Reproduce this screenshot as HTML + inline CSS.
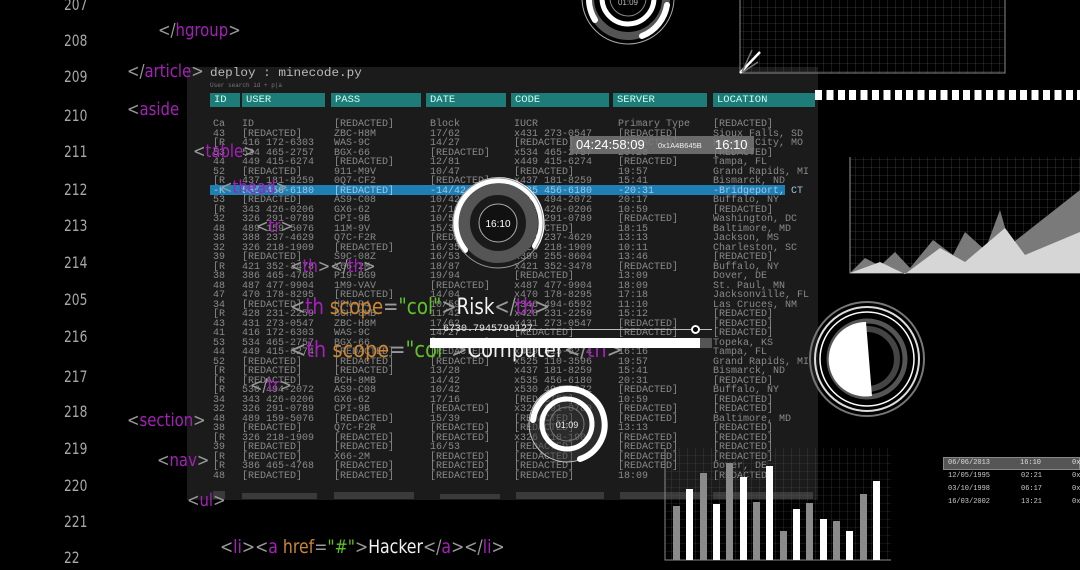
<!DOCTYPE html>
<html><head><meta charset="utf-8"><style>
*{margin:0;padding:0;box-sizing:border-box}
body{width:1080px;height:570px;background:#000;overflow:hidden;position:relative;font-family:"Liberation Mono",monospace}
.a{position:absolute;white-space:nowrap}
.ln{position:absolute;left:64px;font-family:"DejaVu Sans Condensed","DejaVu Sans",sans-serif;font-size:16px;color:#a8a8a8;transform:scaleX(.85);transform-origin:left}
.tg{position:absolute;font-family:"DejaVu Sans Condensed","DejaVu Sans",sans-serif;font-size:18px;color:#9a9a9a;white-space:nowrap;transform:scaleX(.92);transform-origin:left}
.p{color:#a421b8}.o{color:#c98634}.g{color:#5fc226}.w{color:#f2f2f2}
#panel{position:absolute;left:187px;top:67px;width:631px;height:433px;background:#1b1b1b}
.hd{position:absolute;top:93px;height:14px;background:#1d7c77;}
.hd span{position:absolute;left:4px;top:1px;color:#cfe;font-size:10.5px;line-height:13px}
.row{position:absolute;left:0;height:10px;font-size:10px;line-height:10px;color:#8a8a8a;white-space:nowrap}
.row span{position:absolute;top:0}
.br{position:absolute;background:#3a3a3a}
</style></head><body>
<div id="panel"></div>
<div class="a" style="left:210px;top:67px;font-size:11.5px;color:#bbb;transform:scaleX(1.1);transform-origin:left">deploy : minecode.py</div>
<div class="a" style="left:210px;top:82px;font-size:6px;color:#777">User search id + p|a</div>
<div class="hd" style="left:210px;width:30px"><span>ID</span></div>
<div class="hd" style="left:242px;width:83px"><span>USER</span></div>
<div class="hd" style="left:331px;width:90px"><span>PASS</span></div>
<div class="hd" style="left:426px;width:80px"><span>DATE</span></div>
<div class="hd" style="left:511px;width:98px"><span>CODE</span></div>
<div class="hd" style="left:613px;width:94px"><span>SERVER</span></div>
<div class="hd" style="left:713px;width:102px"><span>LOCATION</span></div>
<div class="a" style="left:815px;top:90px;width:265px;height:10px;background:repeating-linear-gradient(90deg,#fff 0 7px,#000 7px 11.4px)"></div>
<div class="a" style="left:210px;top:185px;width:575px;height:10px;background:#1f7fb5"></div>
<div id="rows"></div>
<script>
var d=[
["Ca","ID","[REDACTED]","Block","IUCR","Primary Type","[REDACTED]"],
["43","[REDACTED]","ZBC-H8M","17/62","x431 273-0547","[REDACTED]","Sioux Falls, SD"],
["[R","416 172-6303","WAS-9C","14/27","[REDACTED]","[REDACTED]","Kansas City, MO"],
["53","534 465-2757","BGX-66","[REDACTED]","x534 465-2757","20:28","[REDACTED]"],
["44","449 415-6274","[REDACTED]","12/81","x449 415-6274","[REDACTED]","Tampa, FL"],
["52","[REDACTED]","911-M9V","10/47","[REDACTED]","19:57","Grand Rapids, MI"],
["[R","437 181-8259","0Q7-CF2","[REDACTED]","x437 181-8259","15:41","Bismarck, ND"],
["-K","535 456-6180","[REDACTED]","-14/42","x535 456-6180","-20:31","-Bridgeport, CT"],
["53","[REDACTED]","AS9-C08","10/42","x530 494-2072","20:17","Buffalo, NY"],
["[R","343 426-0206","GX6-62","17/16","x343 426-0206","10:59","[REDACTED]"],
["32","326 291-0789","CPI-9B","10/59","x326 291-0789","[REDACTED]","Washington, DC"],
["48","489 159-5076","11M-9V","15/39","[REDACTED]","18:15","Baltimore, MD"],
["38","388 237-4629","Q7C-F2R","[REDACTED]","x388 237-4629","13:13","Jackson, MS"],
["32","326 218-1909","[REDACTED]","16/35","x326 218-1909","10:11","Charleston, SC"],
["39","[REDACTED]","S9C-08Z","16/53","x399 255-8604","13:46","[REDACTED]"],
["[R","421 352-3478","X66-2M","18/87","x421 352-3478","[REDACTED]","Buffalo, NY"],
["38","386 465-4768","P19-BG9","19/94","[REDACTED]","13:09","Dover, DE"],
["48","487 477-9904","1M9-VAV","[REDACTED]","x487 477-9904","18:09","St. Paul, MN"],
["47","470 178-8295","[REDACTED]","14/04","x470 178-8295","17:18","Jacksonville, FL"],
["34","[REDACTED]","HPN-R4","10/59","x346 494-6592","11:10","Las Cruces, NM"],
["[R","428 231-2259","BCH-8MB","11/42","x428 231-2259","15:12","[REDACTED]"],
["43","431 273-0547","ZBC-H8M","17/62","x431 273-0547","[REDACTED]","[REDACTED]"],
["41","416 172-6303","WAS-9C","14/27","[REDACTED]","[REDACTED]","[REDACTED]"],
["53","534 465-2757","BGX-66","[REDACTED]","x534 465-2757","20:28","Topeka, KS"],
["44","449 415-6274","[REDACTED]","[REDACTED]","x449 415-6274","16:16","Tampa, FL"],
["52","[REDACTED]","[REDACTED]","[REDACTED]","x525 110-3596","19:57","Grand Rapids, MI"],
["[R","[REDACTED]","[REDACTED]","13/28","x437 181-8259","15:41","Bismarck, ND"],
["[R","[REDACTED]","BCH-8MB","14/42","x535 456-6180","20:31","[REDACTED]"],
["[R","530 494-2072","AS9-C08","10/42","x530 494-2072","[REDACTED]","Buffalo, NY"],
["34","343 426-0206","GX6-62","17/16","[REDACTED]","10:59","[REDACTED]"],
["32","326 291-0789","CPI-9B","[REDACTED]","x326 291-0789","[REDACTED]","[REDACTED]"],
["48","489 159-5076","[REDACTED]","15/39","[REDACTED]","[REDACTED]","Baltimore, MD"],
["38","[REDACTED]","Q7C-F2R","[REDACTED]","[REDACTED]","13:13","[REDACTED]"],
["[R","326 218-1909","[REDACTED]","[REDACTED]","x326 218-1909","[REDACTED]","[REDACTED]"],
["39","[REDACTED]","[REDACTED]","16/53","[REDACTED]","[REDACTED]","[REDACTED]"],
["[R","[REDACTED]","X66-2M","[REDACTED]","[REDACTED]","[REDACTED]","[REDACTED]"],
["[R","386 465-4768","[REDACTED]","[REDACTED]","[REDACTED]","[REDACTED]","Dover, DE"],
["48","[REDACTED]","[REDACTED]","[REDACTED]","[REDACTED]","18:09","[REDACTED]"]];
var X=[213,242,334,430,514,618,713];
var h="";d.forEach(function(r,i){var t=120+i*9.51;h+='<div class="row" style="top:'+t+'px;'+(i==7?'color:#9cc8e6':'')+'">';r.forEach(function(c,j){h+='<span style="left:'+X[j]+'px">'+c+'</span>'});h+='</div>'});
document.getElementById("rows").innerHTML=h;
</script>
<div class="br" style="left:213px;top:491px;width:12px;height:8px"></div>
<div class="br" style="left:242px;top:493px;width:75px;height:6px"></div>
<div class="br" style="left:334px;top:492px;width:80px;height:7px"></div>
<div class="br" style="left:440px;top:494px;width:60px;height:5px"></div>
<div class="br" style="left:516px;top:492px;width:88px;height:7px"></div>
<div class="br" style="left:620px;top:492px;width:80px;height:7px"></div>
<div class="br" style="left:713px;top:492px;width:100px;height:7px"></div>

<div class="ln" style="top:-5px">207</div>
<div class="ln" style="top:31px">208</div>
<div class="ln" style="top:67px">209</div>
<div class="ln" style="top:106px">210</div>
<div class="ln" style="top:142px">211</div>
<div class="ln" style="top:180px">212</div>
<div class="ln" style="top:216px">213</div>
<div class="ln" style="top:253px">214</div>
<div class="ln" style="top:290px">205</div>
<div class="ln" style="top:327px">216</div>
<div class="ln" style="top:367px">217</div>
<div class="ln" style="top:402px">218</div>
<div class="ln" style="top:439px">219</div>
<div class="ln" style="top:476px">220</div>
<div class="ln" style="top:512px">221</div>
<div class="ln" style="top:548px">22</div>

<div class="tg" style="left:158px;top:20px">&lt;/<span class="p">hgroup</span>&gt;</div>
<div class="tg" style="left:127px;top:61px">&lt;/<span class="p">article</span>&gt;</div>
<div class="tg" style="left:127px;top:99px">&lt;<span class="p">aside</span></div>
<div class="tg" style="left:193px;top:141px">&lt;<span class="p">table</span>&gt;</div>
<div class="tg" style="left:220px;top:177px">&lt;<span class="p">thead</span>&gt;</div>
<div class="tg" style="left:256px;top:216px">&lt;<span class="p">tr</span>&gt;</div>
<div class="tg" style="left:290px;top:256px">&lt;<span class="p">th</span>&gt;&lt;/<span class="p">th</span>&gt;</div>
<div class="tg" style="left:290px;top:295px;font-size:22px">&lt;<span class="p">th</span> <span class="o">scope</span>=<span class="g">"col"</span>&gt;<span class="w">Risk</span>&lt;/<span class="p">th</span>&gt;</div>
<div class="tg" style="left:290px;top:338px;font-size:22px;transform:scaleX(.98)">&lt;<span class="p">th</span> <span class="o">scope</span>=<span class="g">"col"</span>&gt;<span class="w">Computer</span>&lt;/<span class="p">th</span>&gt;</div>
<div class="tg" style="left:250px;top:375px">&lt;/<span class="p">tr</span>&gt;</div>
<div class="tg" style="left:127px;top:410px">&lt;<span class="p">section</span>&gt;</div>
<div class="tg" style="left:157px;top:450px">&lt;<span class="p">nav</span>&gt;</div>
<div class="tg" style="left:187px;top:490px">&lt;<span class="p">ul</span>&gt;</div>
<div class="tg" style="left:220px;top:536px;font-size:19px">&lt;<span class="p">li</span>&gt;&lt;<span class="p">a</span> <span class="o">href</span>=<span class="g">"#"</span>&gt;<span class="w">Hacker</span>&lt;/<span class="p">a</span>&gt;&lt;/<span class="p">li</span>&gt;</div>

<div class="a" style="left:430px;top:329px;width:282px;height:1px;background:#bbb"></div>
<div class="a" style="left:691px;top:325px;width:9px;height:9px;border:2px solid #fff;border-radius:50%;background:#000"></div>
<div class="a" style="left:443px;top:324px;font-size:10px;color:#eee">6730.7945799127</div>
<div class="a" style="left:430px;top:338px;width:270px;height:10px;background:#fff"></div>
<div class="a" style="left:700px;top:338px;width:12px;height:10px;background:#555"></div>

<div class="a" style="left:570px;top:136px;width:184px;height:18px;background:rgba(120,120,120,.85)"></div>
<div class="a" style="left:576px;top:137px;font-family:'Liberation Sans',sans-serif;font-size:13px;color:#fff">04:24:58:09</div>
<div class="a" style="left:658px;top:141px;font-family:'Liberation Sans',sans-serif;font-size:7.5px;color:#eee">0x1A4B645B</div>
<div class="a" style="left:715px;top:137px;font-family:'Liberation Sans',sans-serif;font-size:13px;color:#fff">16:10</div>

<svg class="a" style="left:0;top:0" width="1080" height="570" viewBox="0 0 1080 570">
<defs>
<pattern id="gr" width="8" height="8" patternUnits="userSpaceOnUse"><path d="M8 0V8H0" fill="none" stroke="#555" stroke-width=".6"/></pattern>
</defs>
<rect x="740" y="0" width="265" height="73" fill="url(#gr)"/>
<path d="M740 0V73H1005V0" fill="none" stroke="#888"/>
<path d="M740 73L760 52" stroke="#fff" stroke-width="2.5"/>
<path d="M742 72L752 50M743 72L758 62" stroke="#777" stroke-width="1.5"/>
<rect x="850" y="157" width="230" height="116" fill="url(#gr)"/>
<path d="M850 157V273H1080" fill="none" stroke="#999"/>
<polygon points="850,273 865,258 880,266 895,252 910,268 933,240 953,255 965,232 985,250 1000,210 1010,245 1080,190 1080,273" fill="#7a7a7a"/>
<polygon points="850,273 880,262 905,274 940,248 965,262 1005,228 1025,255 1080,232 1080,273" fill="#d6d6d6"/>
<rect x="665" y="448" width="226" height="112" fill="url(#gr)" opacity=".8"/>
<path d="M665 448V560H891" fill="none" stroke="#888"/>
<g fill="#8a8a8a"><rect x="673" y="506" width="7" height="54"/><rect x="700" y="473" width="7" height="87"/><rect x="726" y="463" width="7" height="97"/><rect x="753" y="502" width="7" height="58"/><rect x="780" y="531" width="7" height="29"/><rect x="806" y="503" width="7" height="57"/><rect x="833" y="521" width="7" height="39"/><rect x="860" y="494" width="7" height="66"/></g>
<g fill="#fff"><rect x="686" y="489" width="7" height="71"/><rect x="713" y="504" width="7" height="56"/><rect x="740" y="477" width="7" height="83"/><rect x="766" y="466" width="7" height="94"/><rect x="793" y="509" width="7" height="51"/><rect x="820" y="519" width="7" height="41"/><rect x="846" y="531" width="7" height="29"/><rect x="873" y="481" width="7" height="79"/></g>
<circle cx="498" cy="223" r="34" fill="#1a1a1a" stroke="#555" stroke-width="12"/>
<path d="M465 250 A43 43 0 1 1 535 246" fill="none" stroke="#fff" stroke-width="6" stroke-linecap="round"/>
<circle cx="498" cy="223" r="45" fill="none" stroke="#999" stroke-width="1"/>
<circle cx="498" cy="223" r="19" fill="#111" stroke="#aaa" stroke-width="1"/>
<text x="498" y="227" fill="#fff" font-family="Liberation Sans" font-size="10" text-anchor="middle">16:10</text>
<circle cx="628" cy="-2" r="46" fill="none" stroke="#aaa" stroke-width="1"/>
<circle cx="628" cy="-2" r="38" fill="none" stroke="#555" stroke-width="8"/>
<path d="M595 20 A40 40 0 0 1 590 -10" fill="none" stroke="#fff" stroke-width="6" stroke-linecap="round"/>
<path d="M642 36 A40 40 0 0 0 667 5" fill="none" stroke="#fff" stroke-width="6" stroke-linecap="round"/>
<circle cx="628" cy="-2" r="26" fill="none" stroke="#fff" stroke-width="5"/>
<circle cx="628" cy="-2" r="18" fill="none" stroke="#888" stroke-width="1"/>
<text x="628" y="5" fill="#bbb" font-family="Liberation Sans" font-size="8" text-anchor="middle">01:09</text>
<circle cx="567" cy="424" r="38" fill="rgba(60,60,60,.5)" stroke="#ccc" stroke-width="1"/>
<path d="M580 459 A36 36 0 1 0 533 420" fill="none" stroke="#fff" stroke-width="6" stroke-linecap="round"/>
<circle cx="567" cy="424" r="25" fill="none" stroke="#fff" stroke-width="5"/>
<circle cx="567" cy="424" r="17" fill="none" stroke="#777" stroke-width="1"/>
<text x="567" y="428" fill="#eee" font-family="Liberation Sans" font-size="9" text-anchor="middle">01:09</text>
<circle cx="867" cy="359" r="57" fill="none" stroke="#777" stroke-width="2"/>
<circle cx="867" cy="359" r="52" fill="none" stroke="#ddd" stroke-width="2"/>
<circle cx="867" cy="359" r="47" fill="none" stroke="#fff" stroke-width="1.5"/>
<circle cx="867" cy="359" r="38" fill="none" stroke="#555" stroke-width="5"/>
<circle cx="867" cy="359" r="30" fill="none" stroke="#444" stroke-width="6"/>
<path d="M866 322 L872 396 A37 37 0 0 1 829 355 A37 37 0 0 1 866 322Z" fill="#fff"/>
</svg>

<div class="a" style="left:943px;top:457px;width:137px;height:13px;background:#555;border:1px solid #888"></div>
<div class="a" style="left:948px;top:459px;font-size:7px;color:#ddd">06/06/2013</div>
<div class="a" style="left:1020px;top:459px;font-size:7px;color:#ddd">16:10</div>
<div class="a" style="left:1072px;top:459px;font-size:7px;color:#ddd">0x</div>
<div class="a" style="left:948px;top:472px;font-size:7px;color:#ccc">12/05/1995</div><div class="a" style="left:1021px;top:472px;font-size:7px;color:#ccc">02:21</div><div class="a" style="left:1072px;top:472px;font-size:7px;color:#ccc">0x</div>
<div class="a" style="left:948px;top:485px;font-size:7px;color:#ccc">03/10/1998</div><div class="a" style="left:1021px;top:485px;font-size:7px;color:#ccc">06:17</div><div class="a" style="left:1072px;top:485px;font-size:7px;color:#ccc">0x</div>
<div class="a" style="left:948px;top:498px;font-size:7px;color:#ccc">16/03/2002</div><div class="a" style="left:1021px;top:498px;font-size:7px;color:#ccc">13:21</div><div class="a" style="left:1072px;top:498px;font-size:7px;color:#ccc">0x</div>
</body></html>
